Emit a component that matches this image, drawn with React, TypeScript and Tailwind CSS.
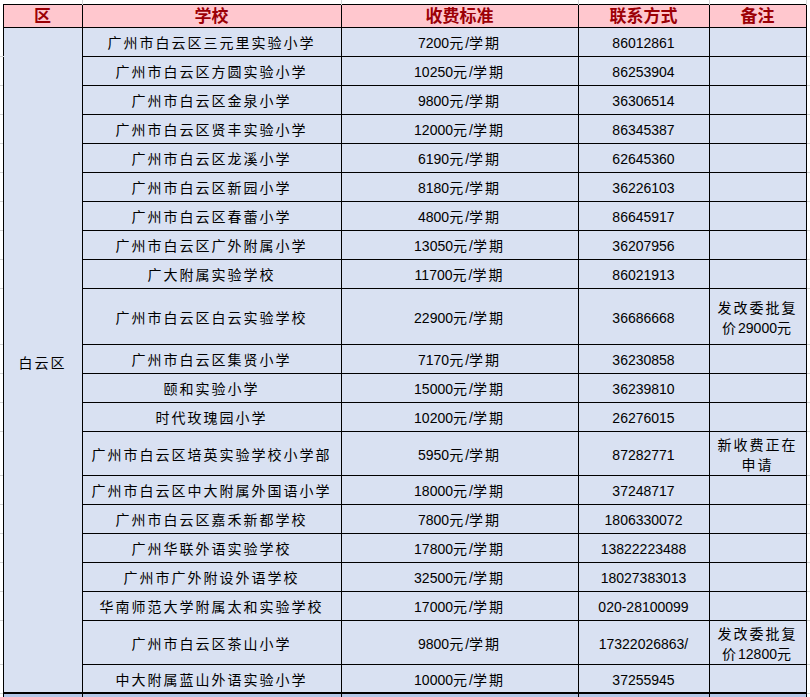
import React from 'react';

type Row = { school: string; fee: string; phone: string; note?: string[]; h?: number };

const rows: Row[] = [
  { school: '广州市白云区三元里实验小学', fee: '7200元/学期', phone: '86012861' },
  { school: '广州市白云区方圆实验小学', fee: '10250元/学期', phone: '86253904' },
  { school: '广州市白云区金泉小学', fee: '9800元/学期', phone: '36306514' },
  { school: '广州市白云区贤丰实验小学', fee: '12000元/学期', phone: '86345387' },
  { school: '广州市白云区龙溪小学', fee: '6190元/学期', phone: '62645360' },
  { school: '广州市白云区新园小学', fee: '8180元/学期', phone: '36226103' },
  { school: '广州市白云区春蕾小学', fee: '4800元/学期', phone: '86645917' },
  { school: '广州市白云区广外附属小学', fee: '13050元/学期', phone: '36207956' },
  { school: '广大附属实验学校', fee: '11700元/学期', phone: '86021913' },
  { school: '广州市白云区白云实验学校', fee: '22900元/学期', phone: '36686668', note: ['发改委批复', '价29000元'], h: 56 },
  { school: '广州市白云区集贤小学', fee: '7170元/学期', phone: '36230858' },
  { school: '颐和实验小学', fee: '15000元/学期', phone: '36239810' },
  { school: '时代玫瑰园小学', fee: '10200元/学期', phone: '26276015' },
  { school: '广州市白云区培英实验学校小学部', fee: '5950元/学期', phone: '87282771', note: ['新收费正在', '申请'], h: 44 },
  { school: '广州市白云区中大附属外国语小学', fee: '18000元/学期', phone: '37248717' },
  { school: '广州市白云区嘉禾新都学校', fee: '7800元/学期', phone: '1806330072' },
  { school: '广州华联外语实验学校', fee: '17800元/学期', phone: '13822223488' },
  { school: '广州市广外附设外语学校', fee: '32500元/学期', phone: '18027383013' },
  { school: '华南师范大学附属太和实验学校', fee: '17000元/学期', phone: '020-28100099' },
  { school: '广州市白云区茶山小学', fee: '9800元/学期', phone: '17322026863/', note: ['发改委批复', '价12800元'], h: 43 },
  { school: '中大附属蓝山外语实验小学', fee: '10000元/学期', phone: '37255945' },
];

// Chinese runs get extra tracking, digits stay tight like the sheet
function T({ s }: { s: string }) {
  const parts = s.split(/([\u3000-\u9fff\uff00-\uffef]+)/).filter(Boolean);
  return (
    <>
      {parts.map((p, i) =>
        /[\u3000-\u9fff]/.test(p) ? (
          <span key={i} className="tracking-[2px]">{p}</span>
        ) : (
          <span key={i}>{p}</span>
        )
      )}
    </>
  );
}

const cell = 'border border-black text-center align-middle px-0 pb-0 pt-[3px]';
const head = 'border border-black text-center align-middle px-0 pb-0 pt-[2px]';
const margin = 'border-0 border-b border-[#d4d4d4] p-0';

export default function App() {
  return (
    <div
      className="w-[810px] h-[697px] overflow-hidden bg-white text-[14px] text-black"
      style={{ fontFamily: '"Liberation Sans", "Noto Sans CJK SC", sans-serif' }}
    >
      <table className="border-collapse table-fixed w-[810px]">
        <colgroup>
          <col className="w-[3px]" />
          <col className="w-[79px]" />
          <col className="w-[259px]" />
          <col className="w-[237px]" />
          <col className="w-[131px]" />
          <col className="w-[97px]" />
          <col className="w-[4px]" />
        </colgroup>
        <tbody>
          <tr className="h-[4px]">
            <td className="p-0 border-0" />
            {[0, 1, 2, 3, 4].map((i) => (
              <td key={i} className="p-0 border-0 border-r border-[#d4d4d4]" />
            ))}
            <td className="p-0 border-0" />
          </tr>
          <tr className="h-[23px] bg-[#ffc7ce] text-[#9c0006] text-[17px] font-bold leading-[20px]">
            <td className="p-0 border-0 bg-white" />
            <td className={head}>区</td>
            <td className={head}>学校</td>
            <td className={head}>收费标准</td>
            <td className={head}>联系方式</td>
            <td className={head}>备注</td>
            <td className="p-0 border-0 bg-white" />
          </tr>
          {rows.map((r, i) => (
            <tr key={i} className="bg-[#d9e1f2] leading-[22px]" style={{ height: r.h ?? 29 }}>
              <td className={`${margin} bg-white`} />
              {i === 0 && (
                <td className={`${cell} pt-[6px]`} rowSpan={rows.length}>
                  <T s="白云区" />
                </td>
              )}
              <td className={cell}><T s={r.school} /></td>
              <td className={cell}><T s={r.fee} /></td>
              <td className={cell}><T s={r.phone} /></td>
              <td className={`${cell} leading-[20px]`}>
                {r.note?.map((l, j) => (
                  <div key={j}><T s={l} /></div>
                ))}
              </td>
              <td className={`${margin} bg-white`} />
            </tr>
          ))}
          <tr className="h-[29px] bg-[#b4c6e7]">
            <td className={`${margin} bg-white`} />
            <td className="border border-black border-t-2 p-0" />
            <td className="border border-black border-t-2 p-0" />
            <td className="border border-black border-t-2 p-0" />
            <td className="border border-black border-t-2 p-0" />
            <td className="border border-black border-t-2 p-0" />
            <td className={`${margin} bg-white`} />
          </tr>
        </tbody>
      </table>
    </div>
  );
}
